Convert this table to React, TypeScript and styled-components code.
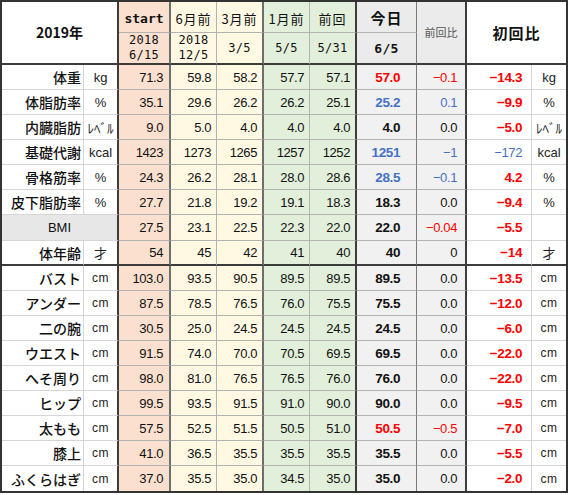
import React from "react";
import styled, { createGlobalStyle, css } from "styled-components";

const Global = createGlobalStyle`
  html, body { margin: 0; padding: 0; background: #fff; }
  body { font-family: "Liberation Sans", Arial, sans-serif; color: #000; }
`;

const PEACH = "#fbe0cf";
const YELLOW = "#fff9e4";
const GREEN = "#e2efda";
const GRAY = "#f1f1f1";
const HEADGRAY = "#ebebeb";
const RED = "#ff0000";
const BLUE = "#4472c4";

const DARK = "2px solid #3c3c3c";
const MID = "2px solid #6e6e6e";
const THIN = "1px solid #b3b3b3";
const LIGHT = "1px solid #d6d6d6";
const DIV = "1px solid #7a7a7a";

type Col = { w: number; r: string; bg: string };
const cols: Col[] = [
  { w: 82, r: LIGHT, bg: "#fff" },
  { w: 35, r: DARK, bg: "#fff" },
  { w: 52, r: MID, bg: PEACH },
  { w: 46, r: THIN, bg: YELLOW },
  { w: 47, r: MID, bg: YELLOW },
  { w: 46, r: THIN, bg: GREEN },
  { w: 47, r: DARK, bg: GREEN },
  { w: 60, r: DIV, bg: GRAY },
  { w: 50, r: DARK, bg: GRAY },
  { w: 65, r: LIGHT, bg: "#fff" },
  { w: 34, r: "none", bg: "#fff" },
];

const Sheet = styled.div`
  display: grid;
  grid-template-columns: ${cols.map((c) => c.w + "px").join(" ")};
  grid-template-rows: 31px 32px repeat(6, 25px) 26px repeat(9, 25px) 25px;
  width: fit-content;
  border: 2px solid #333;
  background: #fff;
`;

const cellBase = css<{ $r: string; $b: string; $bg: string }>`
  box-sizing: border-box;
  display: flex;
  align-items: center;
  min-width: 0;
  overflow: hidden;
  white-space: nowrap;
  border-right: ${(p) => p.$r};
  border-bottom: ${(p) => p.$b};
  background: ${(p) => p.$bg};
`;

const HeadCell = styled.div<{
  $r: string;
  $b: string;
  $bg: string;
  $span?: number;
  $rows?: number;
}>`
  ${cellBase};
  justify-content: center;
  text-align: center;
  grid-column: span ${(p) => p.$span ?? 1};
  grid-row: span ${(p) => p.$rows ?? 1};
  font-family: "Noto Sans CJK JP", sans-serif;
  font-size: 13px;
  line-height: 15px;
  color: #111;
`;

const YearTitle = styled.span`
  font-weight: 700;
  font-size: 14px;
`;
const StartTitle = styled.span`
  font-family: "DejaVu Sans Mono", monospace;
  font-weight: 700;
  font-size: 13px;
  margin-top: 2px;
`;
const PeriodTitle = styled.span`
  letter-spacing: 1px;
  font-size: 13px;
  margin-top: 2px;
`;
const TodayTitle = styled.span`
  font-weight: 700;
  font-size: 15px;
  letter-spacing: 1px;
`;
const DiffTitle = styled.span`
  font-size: 11px;
  color: #555;
`;
const TotalTitle = styled.span`
  font-weight: 700;
  font-size: 15px;
  letter-spacing: 1px;
`;
const DateText = styled.span<{ $bold?: boolean }>`
  font-family: "DejaVu Sans Mono", monospace;
  font-size: ${(p) => (p.$bold ? "13px" : "12px")};
  font-weight: ${(p) => (p.$bold ? 700 : 400)};
  line-height: 15px;
  white-space: pre;
  letter-spacing: 0.3px;
`;

const LabelCell = styled.div<{ $r: string; $b: string; $bg: string; $span?: number }>`
  ${cellBase};
  grid-column: span ${(p) => p.$span ?? 1};
  justify-content: ${(p) => (p.$span ? "center" : "flex-end")};
  padding-right: ${(p) => (p.$span ? "0" : "2px")};
  font-family: ${(p) =>
    p.$span ? '"Liberation Sans", sans-serif' : '"Noto Sans CJK JP", sans-serif'};
  font-size: ${(p) => (p.$span ? "13px" : "14px")};
  font-weight: ${(p) => (p.$span ? 400 : 500)};
  color: #111;
`;

const UnitCell = styled.div<{ $r: string; $b: string; $bg: string; $small?: boolean }>`
  ${cellBase};
  justify-content: center;
  font-family: "Liberation Sans", "Noto Sans CJK JP", sans-serif;
  font-size: ${(p) => (p.$small ? "12px" : "13px")};
  color: #222;
  letter-spacing: ${(p) => (p.$small ? "0.5px" : "0")};
`;

const NumCell = styled.div<{
  $r: string;
  $b: string;
  $bg: string;
  $pad: number;
  $color?: string;
  $bold?: boolean;
}>`
  ${cellBase};
  justify-content: flex-end;
  padding-right: ${(p) => p.$pad}px;
  font-family: "Liberation Sans", Arial, sans-serif;
  font-size: ${(p) => (p.$bold ? "13.5px" : "13px")};
  font-weight: ${(p) => (p.$bold ? 700 : 400)};
  letter-spacing: -0.4px;
  color: ${(p) => p.$color ?? "#111"};
`;

type V = { t: string; c?: "r" | "b" };
type Row = {
  label: string;
  unit: string;
  past: string[];
  today: V;
  diff: V;
  total: V;
  unit2: string;
  bmi?: boolean;
  thick?: boolean;
};

const m = "\u2212";
const rows: Row[] = [
  { label: "体重", unit: "kg", past: ["71.3", "59.8", "58.2", "57.7", "57.1"], today: { t: "57.0", c: "r" }, diff: { t: m + "0.1", c: "r" }, total: { t: m + "14.3", c: "r" }, unit2: "kg" },
  { label: "体脂肪率", unit: "%", past: ["35.1", "29.6", "26.2", "26.2", "25.1"], today: { t: "25.2", c: "b" }, diff: { t: "0.1", c: "b" }, total: { t: m + "9.9", c: "r" }, unit2: "%" },
  { label: "内臓脂肪", unit: "ﾚﾍﾞﾙ", past: ["9.0", "5.0", "4.0", "4.0", "4.0"], today: { t: "4.0" }, diff: { t: "0.0" }, total: { t: m + "5.0", c: "r" }, unit2: "ﾚﾍﾞﾙ" },
  { label: "基礎代謝", unit: "kcal", past: ["1423", "1273", "1265", "1257", "1252"], today: { t: "1251", c: "b" }, diff: { t: m + "1", c: "b" }, total: { t: m + "172", c: "b" }, unit2: "kcal" },
  { label: "骨格筋率", unit: "%", past: ["24.3", "26.2", "28.1", "28.0", "28.6"], today: { t: "28.5", c: "b" }, diff: { t: m + "0.1", c: "b" }, total: { t: "4.2", c: "r" }, unit2: "%" },
  { label: "皮下脂肪率", unit: "%", past: ["27.7", "21.8", "19.2", "19.1", "18.3"], today: { t: "18.3" }, diff: { t: "0.0" }, total: { t: m + "9.4", c: "r" }, unit2: "%" },
  { label: "BMI", unit: "", past: ["27.5", "23.1", "22.5", "22.3", "22.0"], today: { t: "22.0" }, diff: { t: m + "0.04", c: "r" }, total: { t: m + "5.5", c: "r" }, unit2: "", bmi: true },
  { label: "体年齢", unit: "才", past: ["54", "45", "42", "41", "40"], today: { t: "40" }, diff: { t: "0" }, total: { t: m + "14", c: "r" }, unit2: "才", thick: true },
  { label: "バスト", unit: "cm", past: ["103.0", "93.5", "90.5", "89.5", "89.5"], today: { t: "89.5" }, diff: { t: "0.0" }, total: { t: m + "13.5", c: "r" }, unit2: "cm" },
  { label: "アンダー", unit: "cm", past: ["87.5", "78.5", "76.5", "76.0", "75.5"], today: { t: "75.5" }, diff: { t: "0.0" }, total: { t: m + "12.0", c: "r" }, unit2: "cm" },
  { label: "二の腕", unit: "cm", past: ["30.5", "25.0", "24.5", "24.5", "24.5"], today: { t: "24.5" }, diff: { t: "0.0" }, total: { t: m + "6.0", c: "r" }, unit2: "cm" },
  { label: "ウエスト", unit: "cm", past: ["91.5", "74.0", "70.0", "70.5", "69.5"], today: { t: "69.5" }, diff: { t: "0.0" }, total: { t: m + "22.0", c: "r" }, unit2: "cm" },
  { label: "へそ周り", unit: "cm", past: ["98.0", "81.0", "76.5", "76.5", "76.0"], today: { t: "76.0" }, diff: { t: "0.0" }, total: { t: m + "22.0", c: "r" }, unit2: "cm" },
  { label: "ヒップ", unit: "cm", past: ["99.5", "93.5", "91.5", "91.0", "90.0"], today: { t: "90.0" }, diff: { t: "0.0" }, total: { t: m + "9.5", c: "r" }, unit2: "cm" },
  { label: "太もも", unit: "cm", past: ["57.5", "52.5", "51.5", "50.5", "51.0"], today: { t: "50.5", c: "r" }, diff: { t: m + "0.5", c: "r" }, total: { t: m + "7.0", c: "r" }, unit2: "cm" },
  { label: "膝上", unit: "cm", past: ["41.0", "36.5", "35.5", "35.5", "35.5"], today: { t: "35.5" }, diff: { t: "0.0" }, total: { t: m + "5.5", c: "r" }, unit2: "cm" },
  { label: "ふくらはぎ", unit: "cm", past: ["37.0", "35.5", "35.0", "34.5", "35.0"], today: { t: "35.0" }, diff: { t: "0.0" }, total: { t: m + "2.0", c: "r" }, unit2: "cm" },
];

const colorOf = (c?: "r" | "b") => (c === "r" ? RED : c === "b" ? BLUE : "#111");
const pastPad = [6, 5, 5, 5, 5];

export default function App() {
  const hb1 = THIN;
  const hb2 = DARK;
  return (
    <>
      <Global />
      <Sheet>
        <HeadCell $r={cols[1].r} $b={hb2} $bg="#fff" $span={2} $rows={2}>
          <YearTitle>2019年</YearTitle>
        </HeadCell>
        <HeadCell $r={cols[2].r} $b={hb1} $bg={PEACH}>
          <StartTitle>start</StartTitle>
        </HeadCell>
        <HeadCell $r={cols[3].r} $b={hb1} $bg={YELLOW}>
          <PeriodTitle>6月前</PeriodTitle>
        </HeadCell>
        <HeadCell $r={cols[4].r} $b={hb1} $bg={YELLOW}>
          <PeriodTitle>3月前</PeriodTitle>
        </HeadCell>
        <HeadCell $r={cols[5].r} $b={hb1} $bg={GREEN}>
          <PeriodTitle>1月前</PeriodTitle>
        </HeadCell>
        <HeadCell $r={cols[6].r} $b={hb1} $bg={GREEN}>
          <PeriodTitle>前回</PeriodTitle>
        </HeadCell>
        <HeadCell $r={cols[7].r} $b={hb1} $bg={HEADGRAY}>
          <TodayTitle>今日</TodayTitle>
        </HeadCell>
        <HeadCell $r={cols[8].r} $b={hb2} $bg={HEADGRAY} $rows={2}>
          <DiffTitle>前回比</DiffTitle>
        </HeadCell>
        <HeadCell $r="none" $b={hb2} $bg="#fff" $span={2} $rows={2}>
          <TotalTitle>初回比</TotalTitle>
        </HeadCell>

        <HeadCell $r={cols[2].r} $b={hb2} $bg={PEACH}>
          <DateText>{"2018\n6/15"}</DateText>
        </HeadCell>
        <HeadCell $r={cols[3].r} $b={hb2} $bg={YELLOW}>
          <DateText>{"2018\n12/5"}</DateText>
        </HeadCell>
        <HeadCell $r={cols[4].r} $b={hb2} $bg={YELLOW}>
          <DateText>3/5</DateText>
        </HeadCell>
        <HeadCell $r={cols[5].r} $b={hb2} $bg={GREEN}>
          <DateText>5/5</DateText>
        </HeadCell>
        <HeadCell $r={cols[6].r} $b={hb2} $bg={GREEN}>
          <DateText>5/31</DateText>
        </HeadCell>
        <HeadCell $r={cols[7].r} $b={hb2} $bg={HEADGRAY}>
          <DateText $bold>6/5</DateText>
        </HeadCell>

        {rows.map((row, i) => {
          const last = i === rows.length - 1;
          const b = last ? "none" : row.thick ? DARK : THIN;
          const lb = last ? "none" : row.thick ? DARK : LIGHT;
          return (
            <React.Fragment key={row.label}>
              {row.bmi ? (
                <LabelCell $r={cols[1].r} $b={lb} $bg="#e7e7e7" $span={2}>
                  {row.label}
                </LabelCell>
              ) : (
                <>
                  <LabelCell $r={cols[0].r} $b={lb} $bg="#fff">
                    {row.label}
                  </LabelCell>
                  <UnitCell $r={cols[1].r} $b={lb} $bg="#fff" $small={row.unit === "cm"}>
                    {row.unit}
                  </UnitCell>
                </>
              )}
              {row.past.map((v, j) => (
                <NumCell key={j} $r={cols[2 + j].r} $b={b} $bg={cols[2 + j].bg} $pad={pastPad[j]}>
                  {v}
                </NumCell>
              ))}
              <NumCell $r={cols[7].r} $b={b} $bg={GRAY} $pad={16} $bold $color={colorOf(row.today.c)}>
                {row.today.t}
              </NumCell>
              <NumCell $r={cols[8].r} $b={b} $bg={GRAY} $pad={8} $color={colorOf(row.diff.c)}>
                {row.diff.t}
              </NumCell>
              <NumCell
                $r={cols[9].r}
                $b={lb}
                $bg="#fff"
                $pad={9}
                $bold={row.total.c === "r"}
                $color={colorOf(row.total.c)}
              >
                {row.total.t}
              </NumCell>
              <UnitCell $r="none" $b={lb} $bg="#fff" $small={row.unit2 === "cm"}>
                {row.unit2}
              </UnitCell>
            </React.Fragment>
          );
        })}
      </Sheet>
    </>
  );
}
